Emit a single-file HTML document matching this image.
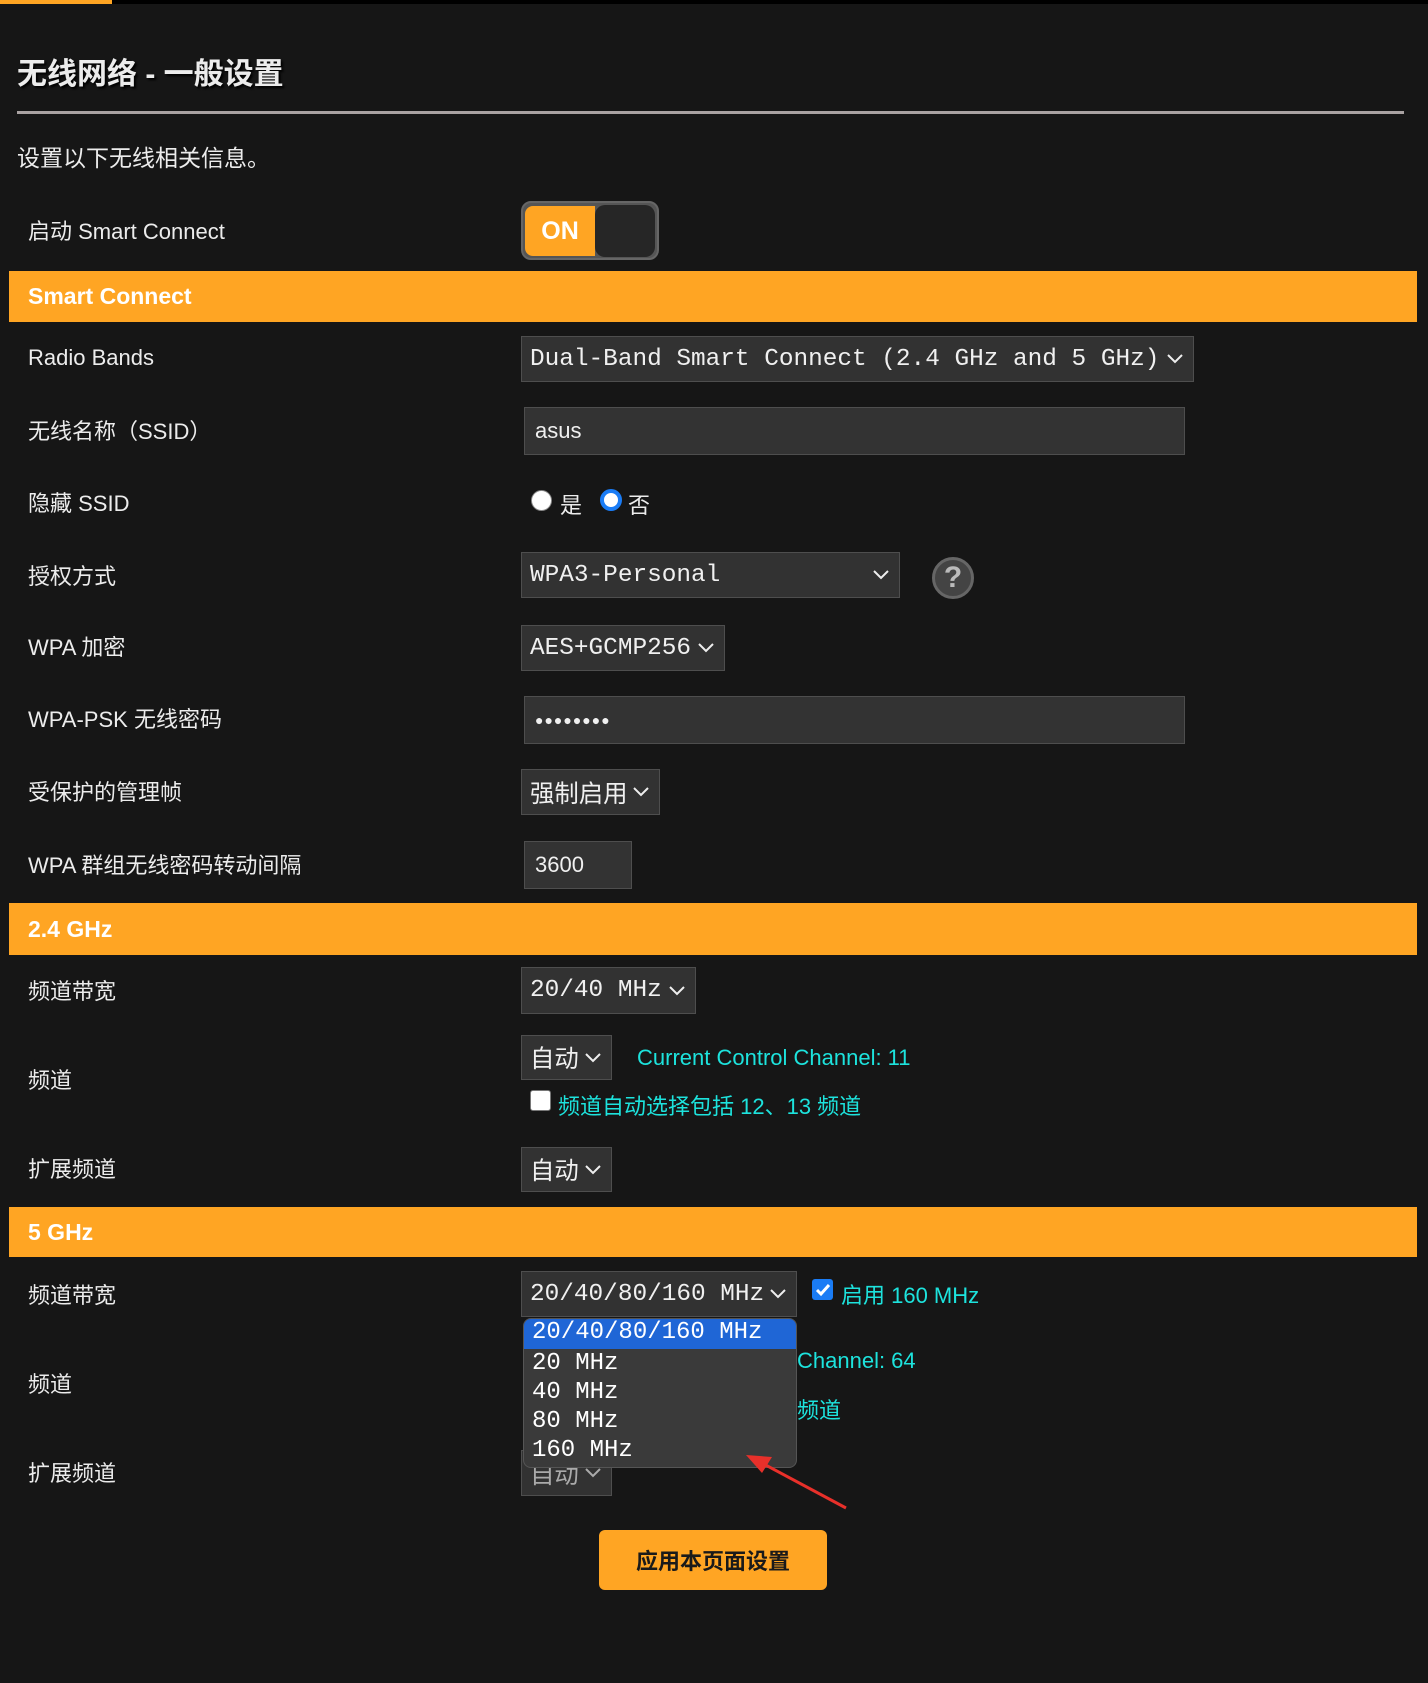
<!DOCTYPE html>
<html><head><meta charset="utf-8"><style>
*{margin:0;padding:0;box-sizing:border-box}
body{width:1428px;height:1683px;background:#161616;position:relative;overflow:hidden;font-family:"Liberation Sans","Noto Sans CJK SC",sans-serif;color:#ececec}
.a{position:absolute}
.lbl{position:absolute;left:28px;font-size:22px;transform:translateY(-50%);white-space:nowrap}
.hdr{position:absolute;left:9px;width:1408px;background:#ffa523;color:#fff;font-weight:bold;font-size:23px;padding-left:19px;display:flex;align-items:center}
.sel{position:absolute;background:#323232;border:1px solid #4e4e4e;font-family:"Liberation Mono","Noto Sans CJK SC",monospace;font-size:24.4px;color:#f0f0f0;display:flex;align-items:center;padding-left:8px;white-space:nowrap}
.sel svg{position:absolute;right:10px;top:50%;margin-top:-5px}
.inp{position:absolute;background:#333;border:1px solid #4e4e4e;font-size:22px;color:#f0f0f0;display:flex;align-items:center;padding-left:10px}
.cy{color:#1de3dd;font-size:22px;position:absolute;transform:translateY(-50%);white-space:nowrap}
.cb{position:absolute;width:21px;height:21px;border-radius:3px}
</style></head><body>
<div class="a" style="left:0;top:0;width:112px;height:4px;background:#ffa523"></div>
<div class="a" style="top:0;width:1316px;height:4px;background:#000;left:112px"></div>
<div class="a" style="left:17px;top:49px;font-size:30px;font-weight:bold;text-shadow:2px 2px 2px #000">无线网络 - 一般设置</div>
<div class="a" style="left:17px;top:111px;width:1387px;height:3px;background:#a9a2a2"></div>
<div class="a" style="left:17px;top:139px;font-size:23px">设置以下无线相关信息。</div>

<div class="lbl" style="top:230px">启动 Smart Connect</div>
<div class="a" style="left:521px;top:201px;width:138px;height:59px;border-radius:10px;background:#555;border:2px solid #666;overflow:hidden">
 <div class="a" style="left:2px;top:3px;width:70px;height:50px;background:#ffa523;border-radius:8px 0 0 8px;color:#fff;font-weight:bold;font-size:25px;display:flex;align-items:center;justify-content:center">ON</div>
 <div class="a" style="left:72px;top:2px;width:60px;height:52px;background:#262626;border-radius:10px"></div>
</div>

<div class="hdr" style="top:271px;height:51px">Smart Connect</div>

<div class="lbl" style="top:358px">Radio Bands</div>
<div class="sel" style="left:521px;top:336px;width:673px;height:46px">Dual-Band Smart Connect (2.4 GHz and 5 GHz)<svg width="16" height="10"><path d="M1 1l7 7 7-7" stroke="#eee" stroke-width="2" fill="none"/></svg></div>

<div class="lbl" style="top:430px">无线名称（SSID）</div>
<div class="inp" style="left:524px;top:407px;width:661px;height:48px">asus</div>

<div class="lbl" style="top:502px">隐藏 SSID</div>
<div class="a" style="left:531px;top:490px;width:21px;height:21px;border-radius:50%;background:#fff;border:1px solid #888"></div>
<div class="a" style="left:560px;top:488px;font-size:22px">是</div>
<div class="a" style="left:600px;top:489px;width:22px;height:22px;border-radius:50%;background:#fff;border:4px solid #1a7cf5"></div>
<div class="a" style="left:628px;top:488px;font-size:22px">否</div>

<div class="lbl" style="top:575px">授权方式</div>
<div class="sel" style="left:521px;top:552px;width:379px;height:46px">WPA3-Personal<svg width="16" height="10"><path d="M1 1l7 7 7-7" stroke="#eee" stroke-width="2" fill="none"/></svg></div>
<div class="a" style="left:932px;top:557px;width:42px;height:42px;border-radius:50%;background:#444;border:3px solid #666;color:#bbb;font-size:30px;font-weight:bold;text-align:center;line-height:36px">?</div>

<div class="lbl" style="top:646px">WPA 加密</div>
<div class="sel" style="left:521px;top:625px;width:204px;height:46px">AES+GCMP256<svg width="16" height="10"><path d="M1 1l7 7 7-7" stroke="#eee" stroke-width="2" fill="none"/></svg></div>

<div class="lbl" style="top:718px">WPA-PSK 无线密码</div>
<div class="inp" style="left:524px;top:696px;width:661px;height:48px;font-size:14px;letter-spacing:1px">●●●●●●●●</div>

<div class="lbl" style="top:791px">受保护的管理帧</div>
<div class="sel" style="left:521px;top:769px;width:139px;height:46px;font-family:'Liberation Sans','Noto Sans CJK SC',sans-serif">强制启用<svg width="16" height="10"><path d="M1 1l7 7 7-7" stroke="#eee" stroke-width="2" fill="none"/></svg></div>

<div class="lbl" style="top:864px">WPA 群组无线密码转动间隔</div>
<div class="inp" style="left:524px;top:841px;width:108px;height:48px">3600</div>

<div class="hdr" style="top:903px;height:52px">2.4 GHz</div>

<div class="lbl" style="top:990px">频道带宽</div>
<div class="sel" style="left:521px;top:967px;width:175px;height:47px">20/40 MHz<svg width="16" height="10"><path d="M1 1l7 7 7-7" stroke="#eee" stroke-width="2" fill="none"/></svg></div>

<div class="lbl" style="top:1079px">频道</div>
<div class="sel" style="left:521px;top:1035px;width:91px;height:45px;font-family:'Liberation Sans','Noto Sans CJK SC',sans-serif">自动<svg width="16" height="10"><path d="M1 1l7 7 7-7" stroke="#eee" stroke-width="2" fill="none"/></svg></div>
<div class="cy" style="left:637px;top:1058px">Current Control Channel: 11</div>
<div class="cb" style="left:530px;top:1090px;background:#fff;border:1px solid #777"></div>
<div class="cy" style="left:558px;top:1105px">频道自动选择包括 12、13 频道</div>

<div class="lbl" style="top:1168px">扩展频道</div>
<div class="sel" style="left:521px;top:1147px;width:91px;height:45px;font-family:'Liberation Sans','Noto Sans CJK SC',sans-serif">自动<svg width="16" height="10"><path d="M1 1l7 7 7-7" stroke="#eee" stroke-width="2" fill="none"/></svg></div>

<div class="hdr" style="top:1207px;height:50px">5 GHz</div>

<div class="lbl" style="top:1294px">频道带宽</div>
<div class="sel" style="left:521px;top:1271px;width:276px;height:46px">20/40/80/160 MHz<svg width="16" height="10"><path d="M1 1l7 7 7-7" stroke="#eee" stroke-width="2" fill="none"/></svg></div>
<div class="cb" style="left:812px;top:1279px;background:#1a7cf5"><svg width="21" height="21"><path d="M5 11l4 4 8-9" stroke="#fff" stroke-width="3" fill="none"/></svg></div>
<div class="cy" style="left:841px;top:1294px">启用 160 MHz</div>

<div class="lbl" style="top:1383px">频道</div>
<div class="cy" style="left:797px;top:1361px">Channel: 64</div>
<div class="cy" style="left:797px;top:1409px">频道</div>

<div class="lbl" style="top:1472px">扩展频道</div>
<div class="sel" style="left:521px;top:1450px;width:91px;height:46px;font-family:'Liberation Sans','Noto Sans CJK SC',sans-serif;color:#aaa">自动<svg width="16" height="10"><path d="M1 1l7 7 7-7" stroke="#aaa" stroke-width="2" fill="none"/></svg></div>

<div class="a" style="left:523px;top:1318px;width:274px;height:150px;background:#3a3a3a;border:1px solid #555;border-radius:8px;overflow:hidden;font-family:'Liberation Mono',monospace;font-size:24px;color:#fff">
 <div style="height:30px;background:#1f66d6;padding-left:8px;line-height:28px">20/40/80/160 MHz</div>
 <div style="height:30px;padding-left:8px;line-height:30px">20 MHz</div>
 <div style="height:30px;padding-left:8px;line-height:28px">40 MHz</div>
 <div style="height:30px;padding-left:8px;line-height:26px">80 MHz</div>
 <div style="height:30px;padding-left:8px;line-height:24px">160 MHz</div>
</div>
<svg class="a" style="left:0;top:0" width="1428" height="1683"><path d="M846 1508L760 1462" stroke="#e8302a" stroke-width="3"/><path d="M746 1455l26 2-10 16z" fill="#e8302a"/></svg>

<div class="a" style="left:599px;top:1530px;width:228px;height:60px;background:#ffa523;border-radius:6px;color:#1a1a1a;font-weight:bold;font-size:22px;display:flex;align-items:center;justify-content:center">应用本页面设置</div>
</body></html>
